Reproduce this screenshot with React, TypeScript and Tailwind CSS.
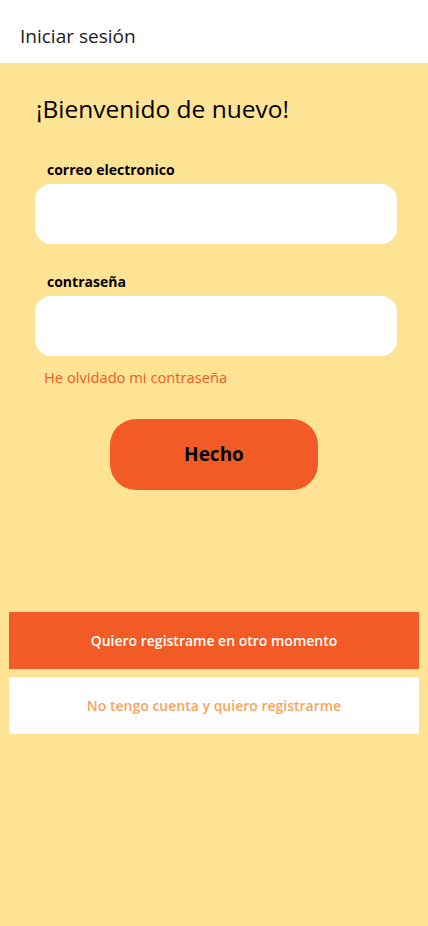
/**
 * LoginScreen - pantalla de inicio de sesión
 */

const font = { fontFamily: '"Open Sans", "Noto Sans", sans-serif' };

function Field({ label, type }: { label: string; type: string }) {
  return (
    <div className="flex flex-col">
      <label className="pl-3 text-[14px] font-bold leading-5 text-black">{label}</label>
      <input
        type={type}
        className="mt-1 h-[60px] w-full rounded-2xl bg-white px-4 text-base outline-none"
      />
    </div>
  );
}

export default function App() {
  return (
    <div className="flex min-h-screen flex-col" style={font}>
      {/* Cabecera */}
      <header className="flex h-[63px] items-center bg-white px-5 pt-[9px]">
        <h1 className="text-[19px] font-normal text-[#1a1a1a]">Iniciar sesión</h1>
      </header>

      {/* Contenido */}
      <main className="flex flex-1 flex-col bg-[#fee394] pb-10">
        <div className="pl-[35px] pr-[31px] pt-[30px]">
          <h2 className="pl-px text-[24.5px] leading-8 text-black">¡Bienvenido de nuevo!</h2>

          <div className="mt-[35px] flex flex-col gap-7">
            <Field label="correo electronico" type="email" />
            <Field label="contraseña" type="password" />
          </div>

          <button className="mt-[9px] pl-[9px] text-[14.7px] leading-6 text-[#f35b26]">
            He olvidado mi contraseña
          </button>
        </div>

        <div className="mt-[30px] flex justify-center">
          <button className="h-[71px] w-[208px] rounded-[26px] bg-[#f35b26] text-[19px] font-bold text-black">
            Hecho
          </button>
        </div>

        <div className="mt-[122px] flex flex-col gap-2 px-[9px]">
          <button className="h-[57px] w-full bg-[#f35b26] text-[14px] font-semibold text-white">
            Quiero registrame en otro momento
          </button>
          <button className="h-[57px] w-full bg-white text-[14px] font-semibold text-[#fba35c]">
            No tengo cuenta y quiero registrarme
          </button>
        </div>
      </main>
    </div>
  );
}
